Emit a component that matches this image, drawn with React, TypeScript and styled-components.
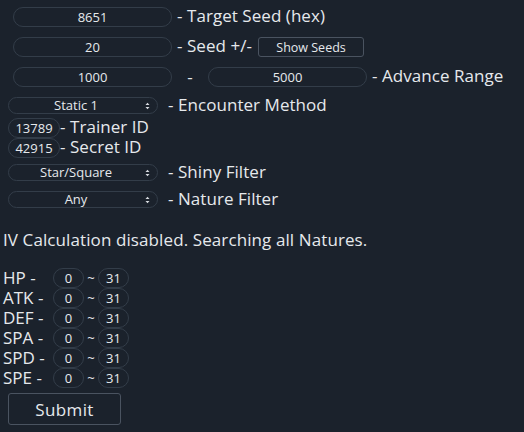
import React from "react";
import styled, { createGlobalStyle } from "styled-components";

const Global = createGlobalStyle`
  html, body { margin: 0; padding: 0; background: #1b222c; }
  body {
    color: #e6e9ec;
    font-family: "Open Sans", "Liberation Sans", sans-serif;
    font-size: 17px;
  }
  * { box-sizing: border-box; }
`;

const Page = styled.div`
  padding: 2px 3px;
  display: flex;
  flex-direction: column;
  align-items: flex-start;
  min-height: 432px;
`;

const Row = styled.div<{ $mt?: number; $h?: number }>`
  display: flex;
  align-items: center;
  height: ${(p) => p.$h ?? 20}px;
  margin-top: ${(p) => p.$mt ?? 0}px;
`;

const Label = styled.span<{ $ml?: number }>`
  font-size: 17px;
  line-height: 20px;
  white-space: nowrap;
  letter-spacing: 0.05px;
  margin-top: -2px;
  margin-left: ${(p) => p.$ml ?? 0}px;
`;

const TextInput = styled.input<{ $w: number; $ml: number; $mr: number }>`
  width: ${(p) => p.$w}px;
  height: 20px;
  margin: 0 ${(p) => p.$mr}px 0 ${(p) => p.$ml}px;
  background: transparent;
  border: 1px solid #333d49;
  border-radius: 10px;
  color: #e6e9ec;
  font-family: "Open Sans", "Liberation Sans", sans-serif;
  font-size: 13px;
  text-align: center;
  padding: 0;
  outline: none;
`;

const SmallButton = styled.button`
  height: 20px;
  width: 106px;
  margin-left: 6px;
  background: transparent;
  border: 1px solid #4a5360;
  border-radius: 3px;
  color: #e6e9ec;
  font-family: "Open Sans", "Liberation Sans", sans-serif;
  font-size: 12.5px;
  padding: 0;
`;

const SelectWrap = styled.div`
  position: relative;
  width: 150px;
  height: 17px;
  margin-left: 5px;
  margin-right: 10px;
`;

const Select = styled.select`
  appearance: none;
  -webkit-appearance: none;
  display: block;
  width: 100%;
  height: 100%;
  background: transparent;
  border: 1px solid #333d49;
  border-radius: 9px;
  color: #e6e9ec;
  font-family: "Open Sans", "Liberation Sans", sans-serif;
  font-size: 13px;
  text-align: center;
  text-align-last: center;
  padding: 0 14px 0 0;
  outline: none;
  line-height: 15px;
`;

const Arrow = styled.svg`
  position: absolute;
  right: 8px;
  top: 4.5px;
  pointer-events: none;
`;

const Dash = styled.span`
  width: 36px;
  text-align: center;
  font-size: 17px;
  margin-top: -2px;
`;

const Notice = styled.div`
  margin-top: 22px;
  font-size: 17px;
  letter-spacing: 0.1px;
  line-height: 20px;
`;

const IvList = styled.div`
  margin-top: 18px;
  display: flex;
  flex-direction: column;
`;

const IvLabel = styled.span`
  width: 50px;
  font-size: 17px;
  line-height: 20px;
  margin-top: -1px;
`;

const IvInput = styled.input`
  width: 31px;
  height: 20px;
  background: transparent;
  border: 1px solid #333d49;
  border-radius: 10px;
  color: #e6e9ec;
  font-family: "Open Sans", "Liberation Sans", sans-serif;
  font-size: 13px;
  text-align: center;
  padding: 0;
  outline: none;
`;

const Tilde = styled.span`
  width: 14px;
  text-align: center;
  font-size: 13px;
`;

const Submit = styled.button`
  margin-top: 5px;
  margin-left: 5px;
  width: 113px;
  height: 32px;
  background: transparent;
  border: 1px solid #4a5360;
  border-radius: 3px;
  color: #e6e9ec;
  font-family: "Open Sans", "Liberation Sans", sans-serif;
  font-size: 17px;
  letter-spacing: 0.4px;
`;

const SelectBox = ({ value }: { value: string }) => (
  <SelectWrap>
    <Select defaultValue={value}>
      <option>{value}</option>
    </Select>
    <Arrow width="5" height="8" viewBox="0 0 5 8">
      <path d="M0.5 3 L2.5 0.8 L4.5 3 Z M0.5 5 L2.5 7.2 L4.5 5 Z" fill="#d9dde2" />
    </Arrow>
  </SelectWrap>
);

const ivs = ["HP -", "ATK -", "DEF -", "SPA -", "SPD -", "SPE -"];

export default function App() {
  return (
    <>
      <Global />
      <Page>
        <Row $mt={5}>
          <TextInput $w={159} $ml={10} $mr={5} defaultValue="8651" />
          <Label>- Target Seed (hex)</Label>
        </Row>
        <Row $mt={10}>
          <TextInput $w={159} $ml={10} $mr={5} defaultValue="20" />
          <Label>- Seed +/-</Label>
          <SmallButton>Show Seeds</SmallButton>
        </Row>
        <Row $mt={10}>
          <TextInput $w={159} $ml={10} $mr={0} defaultValue="1000" />
          <Dash>-</Dash>
          <TextInput $w={159} $ml={0} $mr={5} defaultValue="5000" />
          <Label>- Advance Range</Label>
        </Row>
        <Row $mt={10} $h={17}>
          <SelectBox value="Static 1" />
          <Label>- Encounter Method</Label>
        </Row>
        <Row $mt={4}>
          <TextInput $w={52} $ml={5} $mr={0} defaultValue="13789" />
          <Label>- Trainer ID</Label>
        </Row>
        <Row>
          <TextInput $w={52} $ml={5} $mr={0} defaultValue="42915" />
          <Label>- Secret ID</Label>
        </Row>
        <Row $mt={6} $h={17}>
          <SelectBox value="Star/Square" />
          <Label>- Shiny Filter</Label>
        </Row>
        <Row $mt={10} $h={17}>
          <SelectBox value="Any" />
          <Label>- Nature Filter</Label>
        </Row>
        <Notice>IV Calculation disabled. Searching all Natures.</Notice>
        <IvList>
          {ivs.map((s) => (
            <Row key={s}>
              <IvLabel>{s}</IvLabel>
              <IvInput defaultValue="0" />
              <Tilde>~</Tilde>
              <IvInput defaultValue="31" />
            </Row>
          ))}
        </IvList>
        <Submit>Submit</Submit>
      </Page>
    </>
  );
}
